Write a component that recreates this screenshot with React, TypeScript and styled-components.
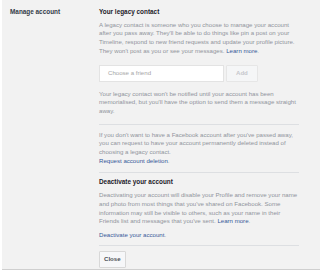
import React from "react";
import styled, { createGlobalStyle } from "styled-components";

const GlobalStyle = createGlobalStyle`
  html, body {
    margin: 0;
    padding: 0;
    background: #ffffff;
  }
  body {
    font-family: "Liberation Sans", Arial, sans-serif;
  }
`;

const Panel = styled.div`
  width: 318px;
  height: 270px;
  margin-left: 2px;
  background: #f2f2f2;
  border-bottom: 1px solid #cfcfcf;
  display: grid;
  grid-template-columns: 89px 203px;
  padding: 8px 0 0 8px;
  box-sizing: border-box;
  font-size: 6.1px;
  line-height: 8.7px;
`;

const Label = styled.div`
  font-weight: bold;
  color: #333b48;
  font-size: 6.4px;
`;

const Content = styled.div`
  display: flex;
  flex-direction: column;
`;

const Heading = styled.div`
  font-weight: bold;
  color: #1d2129;
  font-size: 6.4px;
  margin-bottom: 4px;
`;

const Text = styled.p<{ $top?: number }>`
  margin: ${(p) => p.$top || 0}px 0 0;
  color: #90949c;
`;

const Link = styled.a`
  color: #365899;
  text-decoration: none;
`;

const FriendRow = styled.div`
  display: flex;
  gap: 2px;
  margin: 9px 0 8px;
`;

const FriendInput = styled.div`
  width: 125px;
  height: 17px;
  box-sizing: border-box;
  background: #ffffff;
  border: 1px solid #e3e3e3;
  color: #a6a6a6;
  padding: 0 8px;
  display: flex;
  align-items: center;
`;

const Button = styled.div<{ $disabled?: boolean; $pad: number }>`
  height: 17px;
  box-sizing: border-box;
  padding: 0 ${(p) => p.$pad}px;
  display: inline-flex;
  align-items: center;
  align-self: flex-start;
  background: ${(p) => (p.$disabled ? "#f5f6f7" : "#f6f7f9")};
  border: 1px solid ${(p) => (p.$disabled ? "#e6e6e6" : "#d8d8d8")};
  border-radius: 1px;
  color: ${(p) => (p.$disabled ? "#c5c7cc" : "#4b4f56")};
  font-weight: bold;
`;

const Divider = styled.hr<{ $gap?: string }>`
  border: 0;
  border-top: 1px solid #dddfe2;
  margin: ${(p) => p.$gap || "9px 0"};
  width: 200px;
`;

const App: React.FC = () => {
  return (
    <>
      <GlobalStyle />
      <Panel>
        <Label>Manage account</Label>
        <Content>
          <Heading>Your legacy contact</Heading>
          <Text>
            A legacy contact is someone who you choose to manage your account
            after you pass away. They'll be able to do things like pin a post on
            your Timeline, respond to new friend requests and update your
            profile picture. They won't post as you or see your messages.{" "}
            <Link>Learn more</Link>.
          </Text>
          <FriendRow>
            <FriendInput>Choose a friend</FriendInput>
            <Button $disabled $pad={9}>
              Add
            </Button>
          </FriendRow>
          <Text>
            Your legacy contact won't be notified until your account has been
            memorialised, but you'll have the option to send them a message
            straight away.
          </Text>
          <Divider $gap="8px 0 6px" />
          <Text>
            If you don't want to have a Facebook account after you've passed
            away, you can request to have your account permanently deleted
            instead of choosing a legacy contact.
            <br />
            <Link>Request account deletion</Link>.
          </Text>
          <Divider $gap="7px 0 5px" />
          <Heading>Deactivate your account</Heading>
          <Text>
            Deactivating your account will disable your Profile and remove your
            name and photo from most things that you've shared on Facebook. Some
            information may still be visible to others, such as your name in
            their Friends list and messages that you've sent.{" "}
            <Link>Learn more</Link>.
          </Text>
          <Text $top={5}>
            <Link>Deactivate your account</Link>.
          </Text>
          <Divider $gap="5px 0 5px" />
          <Button $pad={4}>Close</Button>
        </Content>
      </Panel>
    </>
  );
};

export default App;
